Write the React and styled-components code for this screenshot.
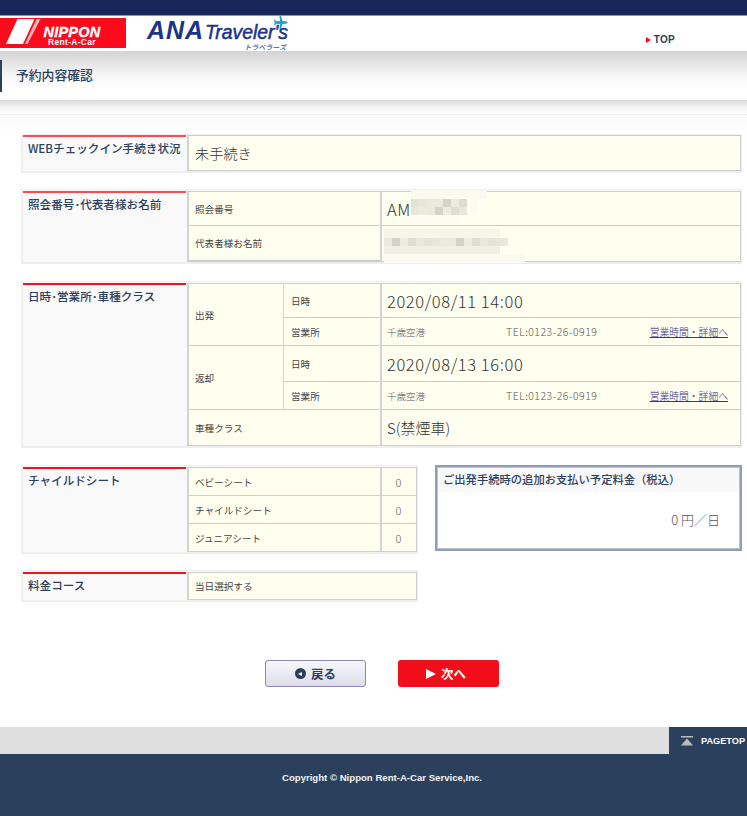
import React from "react";
import styled, { createGlobalStyle } from "styled-components";

const jp = `"Liberation Sans", "Noto Sans CJK JP", sans-serif`;
const cjk = `"Noto Sans CJK JP", "Liberation Sans", sans-serif`;

const Global = createGlobalStyle`
  html, body { margin: 0; padding: 0; background: #fff; }
  body { font-family: ${jp}; color: #444; }
  * { box-sizing: border-box; }
`;

const Page = styled.div`
  width: 747px;
  height: 816px;
  overflow: hidden;
  display: flex;
  flex-direction: column;
`;
const TopStrip = styled.div`
  height: 16px;
  background: #17275a;
  border-bottom: 1px solid #8a93ad;
`;
const Header = styled.header`
  height: 35px;
  display: flex;
  align-items: flex-start;
  background: #fff;
`;
const RedLogo = styled.div`
  width: 126px;
  height: 30px;
  margin-top: 2px;
  background: #fe0a1c;
  display: flex;
  color: #fff;
`;
const LogoWords = styled.div`
  display: flex;
  flex-direction: column;
  align-items: center;
  width: 60px;
  font-family: "Liberation Sans", sans-serif;
  font-weight: 700;
`;
const Nippon = styled.span`
  font-size: 14.5px;
  line-height: 12px;
  font-style: italic;
  margin-top: 8px;
  letter-spacing: 0.2px;
  -webkit-text-stroke: 0.3px #fff;
`;
const RentACar = styled.span`
  font-size: 8.5px;
  line-height: 8px;
  letter-spacing: 0.3px;
`;
const AnaLogo = styled.div`
  position: relative;
  margin-left: 21px;
  width: 141px;
  height: 35px;
  color: #1d3386;
  font-family: "Liberation Sans", sans-serif;
  font-style: italic;
  white-space: nowrap;
`;
const AnaMain = styled.div`
  display: flex;
  align-items: baseline;
  height: 24px;
  line-height: 24px;
  margin-top: 2px;
`;
const AnaWord = styled.span`
  font-size: 25px;
  font-weight: 700;
  letter-spacing: 0.9px;
`;
const TravelWord = styled.span`
  font-size: 19.4px;
  font-weight: 400;
  margin-left: 1px;
  -webkit-text-stroke: 0.5px #1d3386;
`;
const AnaKana = styled.div`
  font-family: "Noto Sans CJK JP", sans-serif;
  font-size: 7px;
  font-weight: 500;
  line-height: 8px;
  text-align: right;
  color: #3d4f96;
  margin-top: 1px;
  padding-right: 2px;
`;
const Plane = styled.svg`
  position: absolute;
  right: 0;
  top: 0;
`;
const TopLink = styled.a`
  margin-left: auto;
  margin-top: 18px;
  margin-right: 72px;
  display: flex;
  align-items: center;
  gap: 3px;
  font-size: 10px;
  line-height: 11px;
  font-weight: 700;
  color: #2b405c;
  letter-spacing: 0.3px;
`;
const RedArrow = styled.span`
  width: 0;
  height: 0;
  border-left: 5px solid #fe0a1c;
  border-top: 3px solid transparent;
  border-bottom: 3px solid transparent;
`;
const TitleBar = styled.div`
  height: 49px;
  padding-top: 9px;
  background: linear-gradient(#d3d3d3, #f6f6f6 50%, #fff 75%);
`;
const Title = styled.h1`
  margin: 0;
  height: 32px;
  border-left: 2px solid #2b405c;
  padding-left: 14px;
  font-family: ${cjk};
  font-size: 12.8px;
  font-weight: 500;
  line-height: 30px;
  color: #2b405c;
`;
const TitleShade = styled.div`
  height: 15px;
  background: linear-gradient(#d9d9d9, #f6f6f6 55%, #fdfdfd);
  border-bottom: 1px solid #efefef;
`;
const Main = styled.main`
  flex: 1;
  background: linear-gradient(#f9f9f9, #fff 18px);
  padding: 19px 5px 0 21px;
  display: flex;
  flex-direction: column;
`;
const Section = styled.section`
  display: grid;
  grid-template-columns: 164px ${(p) => p.$width || 554}px;
  width: ${(p) => (p.$width || 554) + 167}px;
  margin-bottom: ${(p) => p.$gap ?? 16}px;
  padding-top: ${(p) => (p.$flush ? 0 : 1)}px;
  background: #f9f9f9;
  border: 1px solid #efefef;
  border-left-width: 2px;
  border-bottom-width: 2px;
`;
const SectionTitle = styled.h2`
  margin: 0 1px 0 0;
  padding: 4px 4px 0 5px;
  border-top: 2px solid ${(p) => p.$red || "#fb4a50"};
  font-family: ${cjk};
  font-size: 11.6px;
  line-height: 15px;
  font-weight: 500;
  color: #2b405c;
  white-space: nowrap;
`;
const Table = styled.div`
  display: grid;
  grid-template-columns: ${(p) => p.$cols};
  grid-template-rows: ${(p) => p.$rows};
  border: 1px solid #ccc;
  border-width: 1px 1px 1px 0;
  position: relative;
`;
const Cell = styled.div`
  position: relative;
  background: #fffff0;
  border-left: ${(p) => (p.$thin ? 1 : 2)}px solid #d4d4d4;
  border-bottom: 1px solid #ccc;
  padding: 0 7px 0 ${(p) => (p.$thin ? 7 : 6)}px;
  display: flex;
  align-items: center;
  font-family: ${cjk};
  font-size: 9.6px;
  color: #444;
  min-width: 0;
  grid-column: ${(p) => p.$col || "auto"};
  grid-row: ${(p) => p.$row || "auto"};
  &:last-child { border-bottom: 0; }
  &.end { border-bottom: 0; }
`;
const ValueCell = styled(Cell)`
  padding-left: 5px;
`;
const Big = styled.span`
  font-family: ${cjk};
  font-size: 14.2px;
  font-weight: 300;
  color: #333;
  white-space: nowrap;
`;
const ClassText = styled(Big)`
  font-size: 15px;
`;
const DateText = styled(Big)`
  font-size: 16.5px;
  letter-spacing: 0.6px;
`;
const Place = styled.div`
  display: grid;
  grid-template-columns: 119px 143px 1fr;
  align-items: center;
  width: 100%;
  font-weight: 300;
  color: #555;
  font-size: 9.5px;
  white-space: nowrap;
`;
const Phone = styled.span`
  font-size: 10.5px;
  letter-spacing: 0.5px;
`;
const DetailLink = styled.a`
  color: #33338c;
  text-decoration: underline;
  justify-self: end;
  font-size: 9.8px;
  padding-right: 5px;
`;
const Count = styled(Cell)`
  justify-content: center;
  font-size: 11px;
  color: #666;
  font-weight: 300;
`;
const Mosaic = styled.svg`
  position: absolute;
  left: ${(p) => p.$x}px;
  top: ${(p) => p.$y}px;
  pointer-events: none;
`;
const TwoUp = styled.div`
  display: flex;
  align-items: flex-start;
  gap: 17px;
`;
const Narrow = styled.div`
  display: flex;
  flex-direction: column;
`;
const FeeBox = styled.aside`
  width: 307px;
  height: 86px;
  border: 2px solid #8f9db8;
  outline: 1px solid #b9c3d4;
  outline-offset: -3px;
  padding: 1px;
  background: #fff;
`;
const FeeHead = styled.div`
  height: 24px;
  background: #f8f8f8;
  padding-left: 5px;
  font-family: ${cjk};
  font-size: 11.3px;
  font-weight: 500;
  line-height: 23px;
  color: #2b405c;
  white-space: nowrap;
`;
const FeeValue = styled.div`
  text-align: right;
  padding: 19px 19px 0 0;
  font-family: ${cjk};
  font-weight: 300;
  font-size: 13px;
  line-height: 18px;
  color: #555;
`;
const Actions = styled.div`
  display: flex;
  gap: 32px;
  margin-top: 58px;
  padding-left: 244px;
`;
const BaseButton = styled.a`
  width: 101px;
  height: 27px;
  border-radius: 3px;
  display: flex;
  align-items: center;
  justify-content: center;
  font-family: ${cjk};
  font-weight: 700;
  font-size: 12.5px;
  gap: 5px;
`;
const BackButton = styled(BaseButton)`
  background: linear-gradient(#f7f7fb, #dedee9);
  border: 1px solid #8d87b8;
  color: #2b405c;
`;
const NextButton = styled(BaseButton)`
  background: #f20d1a;
  color: #fff;
  padding-right: 5px;
`;
const BackDot = styled.span`
  width: 11px;
  height: 11px;
  border-radius: 50%;
  background: #2b405c;
  display: flex;
  align-items: center;
  justify-content: center;
  &::before {
    content: "";
    border-right: 4px solid #fff;
    border-top: 2.5px solid transparent;
    border-bottom: 2.5px solid transparent;
  }
`;
const WhiteArrow = styled.span`
  border-left: 10px solid #fff;
  border-top: 5.5px solid transparent;
  border-bottom: 5.5px solid transparent;
`;
const FootBar = styled.div`
  height: 27px;
  background: #dfdfdf;
  display: flex;
  justify-content: flex-end;
`;
const PageTop = styled.a`
  width: 78px;
  background: #2b405c;
  color: #fff;
  display: flex;
  align-items: center;
  padding-left: 12px;
  gap: 8px;
  font-size: 9.2px;
  font-weight: 700;
  white-space: nowrap;
`;
const Footer = styled.footer`
  height: 62px;
  background: #2b405c;
  color: #f2f2f2;
  padding: 18px 0 0 17px;
  text-align: center;
  font-size: 9.6px;
  line-height: 12px;
  font-weight: 700;
`;

const shades = ["#ecece0", "#e4e4d6", "#e9e9dc", "#dedfd0", "#e6e6d9", "#d4d4c6", "#e8e8db", "#eaeadd"];

function Blur({ x, y, w, h, rows }) {
  const rects = [];
  rows.forEach((r, ri) => {
    if (r.band) rects.push(<rect key={`b${ri}`} x={r.x} y={r.y} width={r.band} height={r.h} fill={r.fill} />);
    (r.cols || []).forEach((c, ci) => {
      rects.push(<rect key={`${ri}-${ci}`} x={r.x + ci * 8} y={r.y} width={8.2} height={r.h} fill={c} />);
    });
  });
  return (
    <Mosaic $x={x} $y={y} width={w} height={h} aria-hidden="true">
      {rects}
    </Mosaic>
  );
}

const pick = (n, seed) => Array.from({ length: n }, (_, i) => shades[(i * 3 + seed) % shades.length]);

function PlaceRow() {
  return (
    <Place>
      <span>千歳空港</span>
      <Phone>TEL:0123-26-0919</Phone>
      <DetailLink>営業時間・詳細へ</DetailLink>
    </Place>
  );
}

export default function App() {
  return (
    <Page>
      <Global />
      <TopStrip />
      <Header>
        <RedLogo>
          <svg width="42" height="30" viewBox="0 0 42 30" aria-hidden="true">
            <path d="M6 26 L17.500 1 L34.500 1 L23 26 Z" fill="#fff" />
            <path d="M25 26 L36.500 1 L40.500 1 L27.500 26 Z" fill="#ffb4b8" />
          </svg>
          <LogoWords>
            <Nippon>NIPPON</Nippon>
            <RentACar>Rent-A-Car</RentACar>
          </LogoWords>
        </RedLogo>
        <AnaLogo>
          <AnaMain>
            <AnaWord>ANA</AnaWord>
            <TravelWord>Traveler's</TravelWord>
          </AnaMain>
          <AnaKana>トラベラーズ</AnaKana>
          <Plane width="14" height="14" viewBox="0 0 14 14" aria-hidden="true">
            <path d="M5.500 0 L7 0 L8.500 5 L13 5.500 Q14 6.500 13 7.500 L8.500 8 L7 13 L5.500 13 L6 8 L2 7.800 L1 9.500 L0 9.500 L.7 6.500 L0 3.500 L1 3.500 L2 5.200 L6 5 Z" fill="#1ca0dc" />
          </Plane>
        </AnaLogo>
        <TopLink>
          <RedArrow />
          TOP
        </TopLink>
      </Header>
      <TitleBar>
        <Title>予約内容確認</Title>
      </TitleBar>
      <TitleShade />
      <Main>
        <Section $gap={16} $flush>
          <SectionTitle>WEBチェックイン手続き状況</SectionTitle>
          <Table $cols="1fr" $rows="34px">
            <Cell>
              <Big>未手続き</Big>
            </Cell>
          </Table>
        </Section>

        <Section $gap={17}>
          <SectionTitle>照会番号･代表者様お名前</SectionTitle>
          <Table $cols="193px 1fr" $rows="34px 35px">
            <Cell>照会番号</Cell>
            <ValueCell>
              <DateText>AM</DateText>
              <Blur
                x={29}
                y={-2}
                w={80}
                h={34}
                rows={[
                  { x: 0, y: 0, h: 9, band: 76, fill: "#fafaf0" },
                  { x: 0, y: 9, h: 8, cols: pick(7, 1) },
                  { x: 0, y: 17, h: 8, cols: pick(7, 4) },
                  { x: 59, y: 9, h: 16, band: 8, fill: "#fbfbf0" },
                  { x: 0, y: 25, h: 8, band: 50, fill: "#fcfcf2" },
                ]}
              />
            </ValueCell>
            <Cell>代表者様お名前</Cell>
            <ValueCell>
              <Blur
                x={2}
                y={3}
                w={145}
                h={34}
                rows={[
                  { x: 0, y: 0, h: 9, band: 116, fill: "#f5f5e9" },
                  { x: 0, y: 9, h: 8, band: 124, fill: "#e9e9dc", cols: pick(15, 2) },
                  { x: 0, y: 17, h: 8, band: 116, fill: "#efefe3" },
                  { x: 0, y: 25, h: 9, band: 141, fill: "#fafaf1" },
                ]}
              />
            </ValueCell>
          </Table>
        </Section>

        <Section $gap={17}>
          <SectionTitle $red="#f2101a">日時･営業所･車種クラス</SectionTitle>
          <Table $cols="96px 97px 1fr" $rows="34px 28px 36px 28px 35px">
            <Cell $row="span 2">出発</Cell>
            <Cell $thin>日時</Cell>
            <ValueCell>
              <DateText>2020/08/11 14:00</DateText>
            </ValueCell>
            <Cell $thin>営業所</Cell>
            <ValueCell>
              <PlaceRow />
            </ValueCell>
            <Cell $row="span 2">返却</Cell>
            <Cell $thin>日時</Cell>
            <ValueCell>
              <DateText>2020/08/13 16:00</DateText>
            </ValueCell>
            <Cell $thin>営業所</Cell>
            <ValueCell>
              <PlaceRow />
            </ValueCell>
            <Cell $col="span 2" className="end">車種クラス</Cell>
            <ValueCell>
              <ClassText>S(禁煙車)</ClassText>
            </ValueCell>
          </Table>
        </Section>

        <TwoUp>
          <Narrow>
            <Section $width={230} $gap={16}>
              <SectionTitle $red="#f2101a">チャイルドシート</SectionTitle>
              <Table $cols="193px 1fr" $rows="28px 28px 27px">
                <Cell>ベビーシート</Cell>
                <Count>0</Count>
                <Cell>チャイルドシート</Cell>
                <Count>0</Count>
                <Cell className="end">ジュニアシート</Cell>
                <Count>0</Count>
              </Table>
            </Section>
            <Section $width={230} $gap={0}>
              <SectionTitle $red="#f2101a">料金コース</SectionTitle>
              <Table $cols="1fr" $rows="26px">
                <Cell>当日選択する</Cell>
              </Table>
            </Section>
          </Narrow>
          <FeeBox>
            <FeeHead>ご出発手続時の追加お支払い予定料金（税込）</FeeHead>
            <FeeValue>0 円／日</FeeValue>
          </FeeBox>
        </TwoUp>

        <Actions>
          <BackButton>
            <BackDot />
            戻る
          </BackButton>
          <NextButton>
            <WhiteArrow />
            次へ
          </NextButton>
        </Actions>
      </Main>
      <FootBar>
        <PageTop>
          <svg width="12" height="10" viewBox="0 0 12 10" aria-hidden="true">
            <rect x="0" y="0" width="12" height="1.500" fill="#bbb" />
            <path d="M6 2.500 L12 9.500 L0 9.500 Z" fill="#bbb" />
          </svg>
          PAGETOP
        </PageTop>
      </FootBar>
      <Footer>Copyright © Nippon Rent-A-Car Service,Inc.</Footer>
    </Page>
  );
}
